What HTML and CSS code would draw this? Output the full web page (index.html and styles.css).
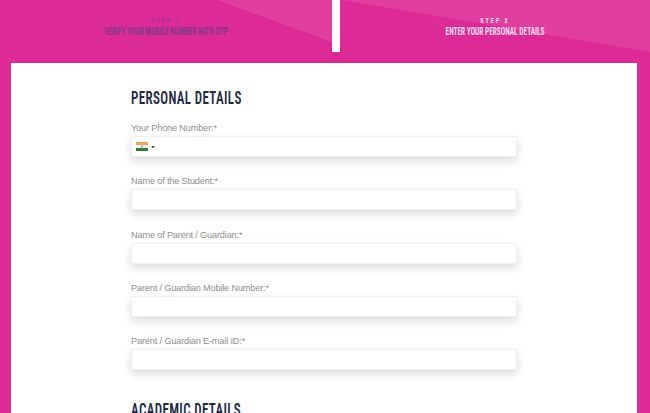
FILE: index.html
```html
<!DOCTYPE html>
<html lang="en">
<head>
    <meta charset="UTF-8">
    <meta name="viewport" content="width=device-width, initial-scale=1.0">
    <title>Registration</title>
    <link rel="stylesheet" href="styles.css">
</head>
<body>

    <!-- STEPS -->
    <header class="steps">
        <div class="step step-done">
            <div class="step-num">STEP 1</div>
            <div class="step-title">VERIFY YOUR MOBILE NUMBER WITH OTP</div>
        </div>
        <div class="step-divider"></div>
        <div class="step step-active">
            <div class="step-num">STEP 2</div>
            <div class="step-title">ENTER YOUR PERSONAL DETAILS</div>
        </div>
    </header>

    <!-- FORM -->
    <main class="card">
        <form class="form">
            <h2 class="form-heading">PERSONAL DETAILS</h2>

            <div class="field">
                <label class="field-label">Your Phone Number:*</label>
                <div class="field-input phone-input">
                    <svg class="flag" width="12" height="9" viewBox="0 0 12 9">
                        <rect width="12" height="3" fill="#f0a35a"/>
                        <rect y="3" width="12" height="3" fill="#f4f1ec"/>
                        <rect y="6" width="12" height="3" fill="#2f7d32"/>
                        <circle cx="6" cy="4.5" r="1" fill="#8d8fb0"/>
                    </svg>
                    <span class="flag-arrow"></span>
                </div>
            </div>

            <div class="field">
                <label class="field-label">Name of the Student:*</label>
                <div class="field-input"></div>
            </div>

            <div class="field">
                <label class="field-label">Name of Parent / Guardian:*</label>
                <div class="field-input"></div>
            </div>

            <div class="field">
                <label class="field-label">Parent / Guardian Mobile Number:*</label>
                <div class="field-input"></div>
            </div>

            <div class="field">
                <label class="field-label">Parent / Guardian E-mail ID:*</label>
                <div class="field-input"></div>
            </div>

            <h2 class="form-heading form-heading-next">ACADEMIC DETAILS</h2>
        </form>
    </main>

</body>
</html>
```

FILE: styles.css
```css
* { box-sizing: border-box; }
html, body { height: 413px; overflow: hidden; }
body { margin: 0; background: #dc2b97; font-family: "Liberation Sans", Arial, sans-serif; }

/* STEPS */
.steps { display: flex; height: 63px; }
.step { position: relative; text-align: center; padding-top: 16px; overflow: hidden; }
.step-done { width: 332px; color: #7d3a86; }
.step-active { width: 310px; color: #fbe3f2; }
.step > div { position: relative; }

/* lighter diagonal shapes behind the steps */
.step::before { content: ""; position: absolute; top: 0; left: 0; right: 0; height: 63px; background: #e03f9f; }
.step-done::before { clip-path: polygon(217px 0, 332px 0, 332px 42px); }
.step-active::before { clip-path: polygon(2px 0, 310px 0, 310px 52px); }

.step-divider { width: 8px; height: 52px; background: #fff; }

/* no condensed family is installed, so Roboto is narrowed and then squeezed */
.step-num { font-family: Roboto, sans-serif; font-stretch: 75%; font-size: 7px; line-height: 10px; letter-spacing: 2.4px; font-weight: 700; transform: scaleX(0.85); }
.step-done .step-num { color: #963c90; }
.step-title { font-family: Roboto, sans-serif; font-stretch: 75%; font-size: 10.5px; line-height: 11.5px; font-weight: 600; transform: scaleX(0.7); }

/* FORM */
.card { margin: 0 13px 0 11px; background: #fff; height: 350px; padding: 24px 120px 0; }
.form { width: 386px; }

.form-heading { font-family: Roboto, sans-serif; font-stretch: 75%; font-size: 17.5px; line-height: 22px; margin: 0 0 13px; color: #232a45; font-weight: 600; letter-spacing: 0.5px; transform: scaleX(0.74); transform-origin: left center; }
.form-heading-next { margin-top: 29px; }

.field { margin-bottom: 18.25px; }
.field-label { display: block; font-size: 9.2px; letter-spacing: -0.17px; line-height: 13px; margin-bottom: 1px; color: #8e8e8e; }
.field-input { height: 21px; background: #fff; border: 1px solid #eee; border-radius: 2px; box-shadow: 0 4px 10px rgba(0,0,0,0.14); }

.phone-input { display: flex; align-items: center; padding-left: 4px; gap: 3px; }
.flag { display: block; }
.flag-arrow { width: 0; height: 0; border-left: 2.5px solid transparent; border-right: 2.5px solid transparent; border-top: 2.5px solid #333; }
```
